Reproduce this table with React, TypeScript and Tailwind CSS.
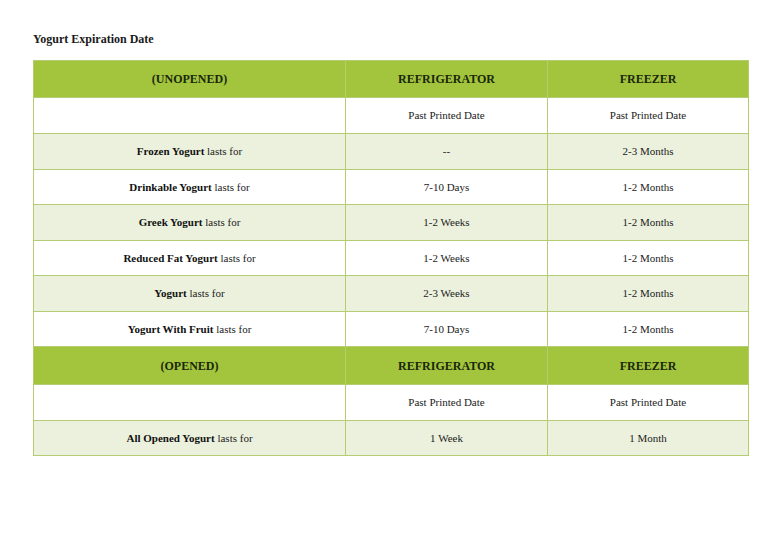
import React from "react";

const rows1: [string, string, string, string][] = [
  ["Frozen Yogurt", " lasts for", "--", "2-3 Months"],
  ["Drinkable Yogurt", " lasts for", "7-10 Days", "1-2 Months"],
  ["Greek Yogurt", " lasts for", "1-2 Weeks", "1-2 Months"],
  ["Reduced Fat Yogurt", " lasts for", "1-2 Weeks", "1-2 Months"],
  ["Yogurt", " lasts for", "2-3 Weeks", "1-2 Months"],
  ["Yogurt With Fruit", " lasts for", "7-10 Days", "1-2 Months"],
];

const cell = "border border-[#b5cc72] text-center font-['Liberation_Serif',serif]";

function Header({ label, h }: { label: string; h: string }) {
  return (
    <tr className={`${h} bg-[#a3c53e] text-[#1a280a] text-[12px] font-bold`}>
      <td className={cell}>{label}</td>
      <td className={cell}>REFRIGERATOR</td>
      <td className={cell}>FREEZER</td>
    </tr>
  );
}

function Blank() {
  return (
    <tr className="h-[36px] bg-white text-[11px] text-[#222]">
      <td className={cell}></td>
      <td className={cell}>Past Printed Date</td>
      <td className={cell}>Past Printed Date</td>
    </tr>
  );
}

export default function App() {
  return (
    <div className="w-[768px] h-[543px] bg-white pt-[31px] pl-[33px] font-['Liberation_Serif',serif]">
      <div className="text-[12px] font-bold text-[#1a1a1a] leading-[16px]">Yogurt Expiration Date</div>
      <table className="mt-[13px] border-collapse w-[715px] table-fixed font-['Liberation_Serif',serif]">
        <colgroup>
          <col className="w-[312px]" />
          <col className="w-[202px]" />
          <col className="w-[201px]" />
        </colgroup>
        <tbody>
          <Header label="(UNOPENED)" h="h-[37px]" />
          <Blank />
          {rows1.map((r, i) => (
            <tr key={i} className={`h-[35.5px] text-[11px] text-[#222] ${i % 2 === 0 ? "bg-[#ebf1dd]" : "bg-white"}`}>
              <td className={cell}>
                <span className="font-bold text-[#111]">{r[0]}</span>
                {r[1]}
              </td>
              <td className={cell}>{r[2]}</td>
              <td className={cell}>{r[3]}</td>
            </tr>
          ))}
          <Header label="(OPENED)" h="h-[38px]" />
          <Blank />
          <tr className="h-[35px] text-[11px] text-[#222] bg-[#ebf1dd]">
            <td className={cell}>
              <span className="font-bold text-[#111]">All Opened Yogurt</span> lasts for
            </td>
            <td className={cell}>1 Week</td>
            <td className={cell}>1 Month</td>
          </tr>
        </tbody>
      </table>
    </div>
  );
}
